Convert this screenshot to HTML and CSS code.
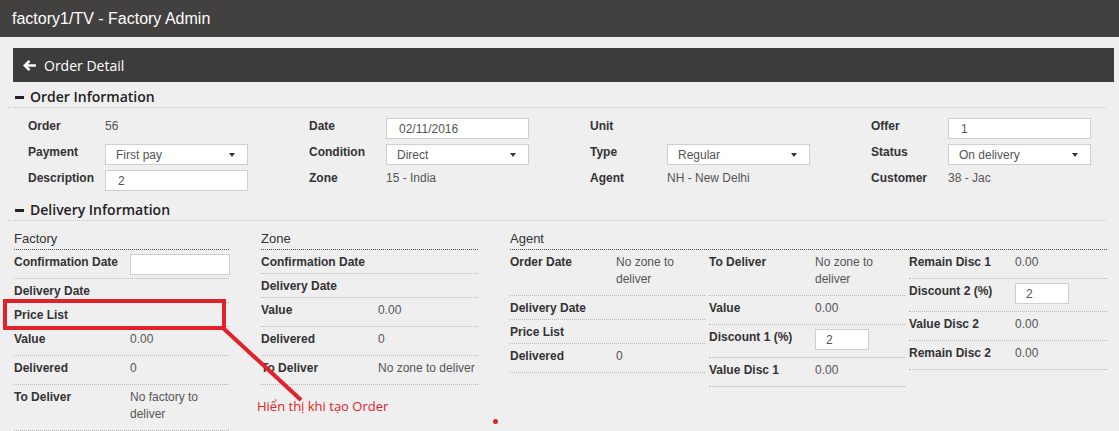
FILE: index.html
```html
<!DOCTYPE html>
<html lang="en">
<head>
<meta charset="utf-8">
<title>Order Detail</title>
<link rel="stylesheet" href="styles.css">
</head>
<body>
<header class="topbar">factory1/TV - Factory Admin</header>
<main class="page">
  <div class="titlebar">
    <svg class="back" viewBox="0 0 13 11" width="13" height="11"><path d="M0 5.5 L5 0.6 Q5.6 0 6.2 0.6 L6.9 1.3 Q7.5 1.9 6.9 2.5 L4.6 4.2 H12.2 Q13 4.2 13 5 V6 Q13 6.8 12.2 6.8 H4.6 L6.9 8.5 Q7.5 9.1 6.9 9.7 L6.2 10.4 Q5.6 11 5 10.4 Z" fill="#fff"/></svg>
    <span>Order Detail</span>
  </div>

  <h2 class="section"><i class="dash"></i>Order Information</h2>
  <div class="info-grid">
    <div class="field"><span class="lbl">Order</span><span class="val">56</span></div>
    <div class="field"><span class="lbl">Date</span><input class="ctl" type="text" value="02/11/2016"></div>
    <div class="field"><span class="lbl">Unit</span></div>
    <div class="field"><span class="lbl">Offer</span><input class="ctl" type="text" value="1"></div>

    <div class="field"><span class="lbl">Payment</span><div class="ctl select"><span>First pay</span><i class="caret"></i></div></div>
    <div class="field"><span class="lbl">Condition</span><div class="ctl select"><span>Direct</span><i class="caret"></i></div></div>
    <div class="field"><span class="lbl">Type</span><div class="ctl select"><span>Regular</span><i class="caret"></i></div></div>
    <div class="field"><span class="lbl">Status</span><div class="ctl select"><span>On delivery</span><i class="caret"></i></div></div>

    <div class="field"><span class="lbl">Description</span><input class="ctl" type="text" value="2"></div>
    <div class="field"><span class="lbl">Zone</span><span class="val">15 - India</span></div>
    <div class="field"><span class="lbl">Agent</span><span class="val">NH - New Delhi</span></div>
    <div class="field"><span class="lbl">Customer</span><span class="val">38 - Jac</span></div>
  </div>

  <h2 class="section delivery-head"><i class="dash"></i>Delivery Information</h2>
  <div class="delivery">
    <div class="dcol factory">
      <div class="dhead">Factory</div>
      <div class="row"><span class="lbl">Confirmation Date</span><input class="cell-input" type="text" value=""></div>
      <div class="row"><span class="lbl">Delivery Date</span></div>
      <div class="row"><span class="lbl">Price List</span></div>
      <div class="row"><span class="lbl">Value</span><span class="val">0.00</span></div>
      <div class="row"><span class="lbl">Delivered</span><span class="val">0</span></div>
      <div class="row"><span class="lbl">To Deliver</span><span class="val">No factory to deliver</span></div>
    </div>

    <div class="dcol zone">
      <div class="dhead">Zone</div>
      <div class="row"><span class="lbl">Confirmation Date</span></div>
      <div class="row"><span class="lbl">Delivery Date</span></div>
      <div class="row"><span class="lbl">Value</span><span class="val">0.00</span></div>
      <div class="row"><span class="lbl">Delivered</span><span class="val">0</span></div>
      <div class="row"><span class="lbl">To Deliver</span><span class="val">No zone to deliver</span></div>
    </div>

    <div class="dcol agent">
      <div class="dhead">Agent</div>
      <div class="agent-cols">
        <div class="sub">
          <div class="row"><span class="lbl">Order Date</span><span class="val">No zone to deliver</span></div>
          <div class="row"><span class="lbl">Delivery Date</span></div>
          <div class="row"><span class="lbl">Price List</span></div>
          <div class="row"><span class="lbl">Delivered</span><span class="val">0</span></div>
        </div>
        <div class="sub">
          <div class="row"><span class="lbl">To Deliver</span><span class="val">No zone to deliver</span></div>
          <div class="row"><span class="lbl">Value</span><span class="val">0.00</span></div>
          <div class="row"><span class="lbl">Discount 1 (%)</span><span class="val"><input class="small-input" type="text" value="2"></span></div>
          <div class="row"><span class="lbl">Value Disc 1</span><span class="val">0.00</span></div>
        </div>
        <div class="sub">
          <div class="row"><span class="lbl">Remain Disc 1</span><span class="val">0.00</span></div>
          <div class="row"><span class="lbl">Discount 2 (%)</span><span class="val"><input class="small-input" type="text" value="2"></span></div>
          <div class="row"><span class="lbl">Value Disc 2</span><span class="val">0.00</span></div>
          <div class="row"><span class="lbl">Remain Disc 2</span><span class="val">0.00</span></div>
        </div>
      </div>
    </div>
  </div>
</main>

<svg class="annotation" width="1119" height="431" viewBox="0 0 1119 431">
  <rect x="5" y="301" width="219" height="27" fill="none" stroke="#e0222b" stroke-width="4"/>
  <line x1="222" y1="327" x2="301" y2="400" stroke="#e0222b" stroke-width="4"/>
  <circle cx="495.5" cy="421.5" r="2.5" fill="#e0222b"/>
</svg>
<span class="note">Hiển thị khi tạo Order</span>
</body>
</html>
```

FILE: styles.css
```css
* {
  box-sizing: border-box;
}

html,
body {
  margin: 0;
  padding: 0;
}

body {
  position: relative;
  width: 1119px;
  height: 431px;
  overflow: hidden;
  background: #efefef;
  font-family: "Liberation Sans", Arial, sans-serif;
  font-size: 12px;
  color: #333;
}

.topbar {
  height: 37px;
  padding-left: 12px;
  background: #43413f;
  color: #fff;
  font-size: 16px;
  line-height: 37px;
}

.page {
  padding-top: 11px;
}

.titlebar {
  display: flex;
  align-items: center;
  height: 34px;
  margin: 0 5px 0 13px;
  padding-left: 10px;
  background: #3c3c3c;
  color: #fff;
  font-family: "Open Sans", sans-serif;
  font-size: 14px;
}

.back {
  display: block;
  margin-right: 8px;
}

.section {
  display: flex;
  align-items: center;
  margin: 0 13px 0 8px;
  padding: 6px 7px 1px;
  border-bottom: 1px dotted #c2c2c2;
  font-family: "Open Sans", sans-serif;
  font-weight: 600;
  font-size: 14px;
  line-height: 18px;
  color: #222;
}

.section.delivery-head {
  padding-top: 5px;
}

.dash {
  display: block;
  width: 9px;
  height: 3px;
  margin-right: 6px;
  background: #222;
}

/* Order information */
.info-grid {
  display: grid;
  grid-template-columns: 281px 281px 281px 235px;
  grid-auto-rows: 26px;
  margin-top: 10px;
  padding-left: 28px;
}

.field {
  display: flex;
  align-items: flex-start;
}

.field .lbl {
  flex: none;
  width: 77px;
  font-weight: bold;
  line-height: 16px;
  color: #333;
}

.field .val {
  line-height: 16px;
  color: #555;
}

.ctl {
  width: 143px;
  height: 21px;
  margin: 0;
  padding: 0 12px;
  border: 1px solid #cfcfcf;
  background: #fff;
  font-family: "Liberation Sans", Arial, sans-serif;
  font-size: 12px;
  color: #555;
  outline: none;
}

.select {
  display: flex;
  align-items: center;
  justify-content: space-between;
  padding: 1px 12px 0 10px;
}

.caret {
  display: block;
  width: 0;
  height: 0;
  border-left: 3.5px solid transparent;
  border-right: 3.5px solid transparent;
  border-top: 4px solid #333;
}

/* Delivery information */
.delivery {
  display: grid;
  grid-template-columns: 215px 217px 597px;
  column-gap: 32px;
  align-items: start;
  margin-top: 6px;
  padding-left: 14px;
}

.dhead {
  padding: 4px 0 2px;
  border-bottom: 1px dotted #4a4a4a;
  font-size: 13px;
  line-height: 16px;
  color: #333;
}

.row {
  display: flex;
  align-items: flex-start;
  padding: 4px 0 3px;
  border-bottom: 1px dotted #b8b8b8;
  line-height: 16px;
}

.row .lbl {
  flex: none;
  width: 116px;
  font-weight: bold;
  color: #333;
}

.zone .row .lbl {
  width: 117px;
}

.agent .row .lbl {
  width: 106px;
}

.row .val {
  flex: 1;
  min-width: 0;
  padding-bottom: 4px;
  line-height: 17px;
  color: #555;
}

.agent-cols {
  display: grid;
  grid-template-columns: 195px 196px 198px;
  column-gap: 4px;
  align-items: start;
}

.cell-input {
  display: block;
  width: 100px;
  height: 21px;
  margin: 0;
  padding: 0 8px;
  border: 1px solid #cfcfcf;
  background: #fff;
  outline: none;
}

.small-input {
  display: block;
  width: 54px;
  height: 21px;
  margin: 0;
  padding: 0 10px;
  border: 1px solid #cfcfcf;
  background: #fff;
  font-family: "Liberation Sans", Arial, sans-serif;
  font-size: 12px;
  color: #555;
  outline: none;
}

/* Annotation overlay drawn over the screenshot */
.annotation {
  position: absolute;
  top: 0;
  left: 0;
  pointer-events: none;
}

.note {
  position: absolute;
  left: 257px;
  top: 397px;
  font-family: "Open Sans", sans-serif;
  font-size: 13px;
  line-height: 18px;
  color: #e0222b;
  white-space: nowrap;
}
```
